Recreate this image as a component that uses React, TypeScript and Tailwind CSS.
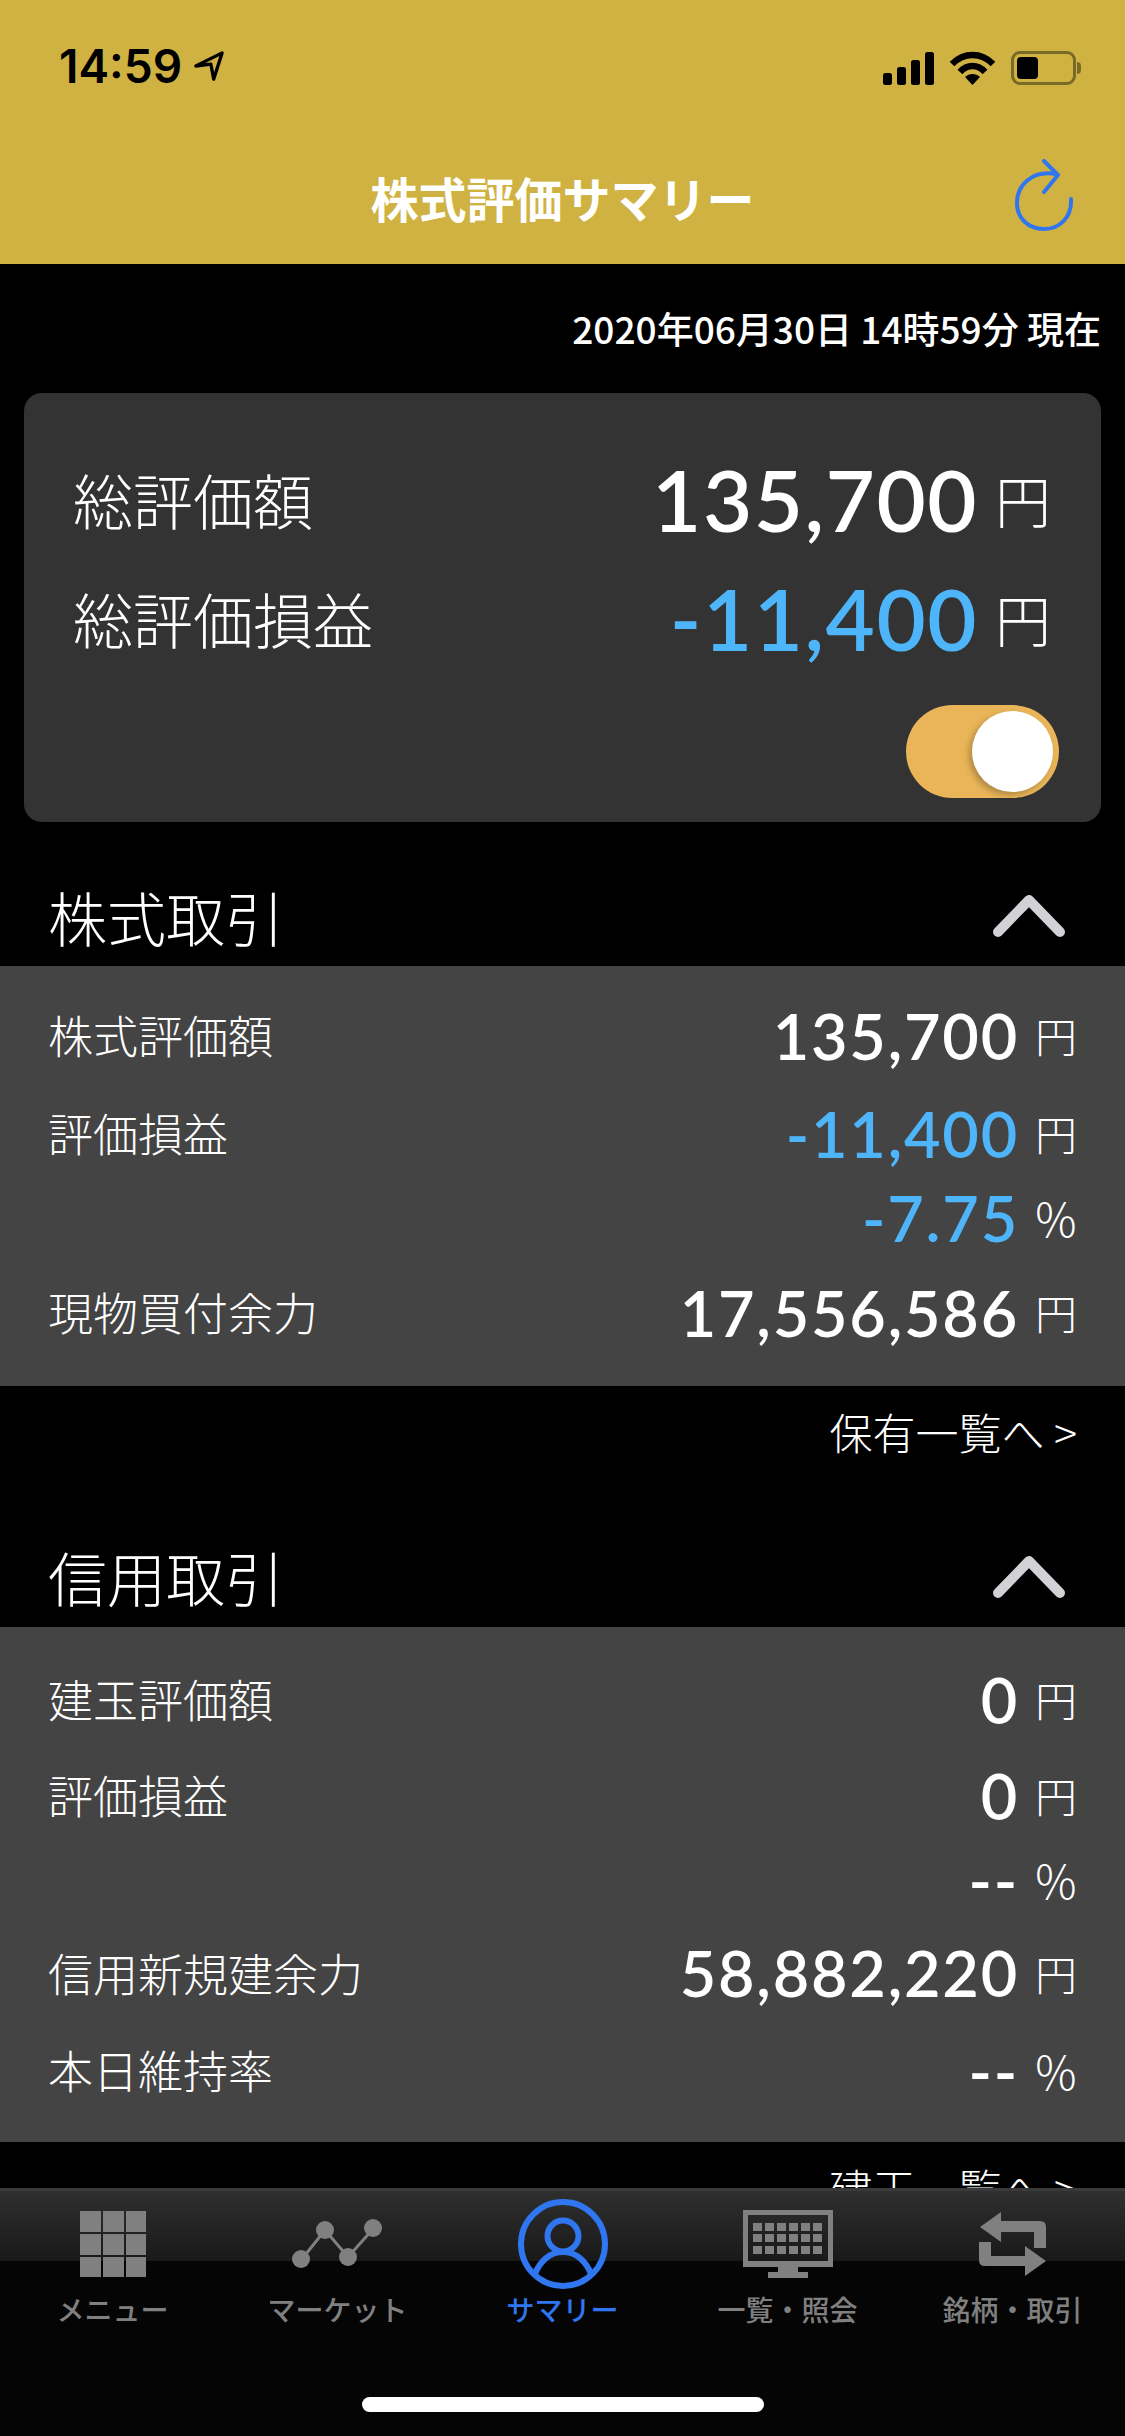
import React from 'react';

const jp = "font-['Noto_Sans_CJK_JP',sans-serif]";
const num = "font-['Lato','Noto_Sans_CJK_JP',sans-serif]";

type Row = {
    label?: string;
    value: string;
    unit: string;
    blue?: boolean;
    cls: string;
};

const stockRows: Row[] = [
    { label: '株式評価額', value: '135,700', unit: '円', cls: 'h-[96px]' },
    { label: '評価損益', value: '-11,400', unit: '円', blue: true, cls: 'h-[100px]' },
    { value: '-7.75', unit: '%', blue: true, cls: 'h-[68px]' },
    { label: '現物買付余力', value: '17,556,586', unit: '円', cls: 'h-[122px]' },
];

const marginRows: Row[] = [
    { label: '建玉評価額', value: '0', unit: '円', cls: 'h-[96px]' },
    { label: '評価損益', value: '0', unit: '円', cls: 'h-[96px]' },
    { value: '--', unit: '%', cls: 'h-[72px]' },
    { label: '信用新規建余力', value: '58,882,220', unit: '円', cls: 'h-[107px] pt-[8px]' },
    { label: '本日維持率', value: '--', unit: '%', cls: 'h-[96px]' },
];

const Chevron = () => (
    <svg width="72" height="42" viewBox="0 0 72 42" fill="none" stroke="#d1d1d6" strokeWidth="10" strokeLinecap="round" strokeLinejoin="round">
        <path d="M5 37 L36 5 L67 37" />
    </svg>
);

const DataRow = ({ row }: { row: Row }) => (
    <div className={`flex items-center justify-between pl-[48px] pr-[48px] ${row.cls}`}>
        <span className={`${jp} text-[45px] font-light text-white`}>{row.label}</span>
        <div className="flex items-center">
            <span className={`${num} text-[63px] font-semibold leading-none tracking-[1.8px] ${row.blue ? 'text-[#4fb5fb]' : 'text-white'}`}>{row.value}</span>
            <span className={`${jp} ml-[16px] w-[42px] text-center font-light leading-none text-white ${row.unit === '%' ? 'text-[46px]' : 'text-[42px]'}`}>{row.unit}</span>
        </div>
    </div>
);

const Section = ({ title, rows, link, top, panel }: { title: string; rows: Row[]; link: string; top: string; panel: string }) => (
    <section>
        <div className={`flex items-center justify-between pl-[48px] pr-[60px] ${top}`}>
            <h2 className={`${jp} text-[59px] font-light leading-none text-white`}>{title}</h2>
            <Chevron />
        </div>
        <div className={`bg-[#444444] ${panel}`}>
            {rows.map((row, i) => (
                <DataRow key={i} row={row} />
            ))}
        </div>
        <div className={`${jp} flex h-[96px] items-center justify-end pb-[6px] pr-[48px] text-[43px] font-light text-white`}>{link}</div>
    </section>
);

const MenuIcon = () => (
    <svg width="66" height="66" viewBox="0 0 66 66" fill="#808080">
        {[0, 23, 46].map((y) =>
            [0, 23, 46].map((x) => <rect key={`${x}-${y}`} x={x} y={y} width="21" height="21" />),
        )}
    </svg>
);

const MarketIcon = () => (
    <svg width="92" height="50" viewBox="0 0 92 50" fill="#808080" stroke="#808080">
        <path d="M10 40 L33 11 L56 38 L81 10" fill="none" strokeWidth="3" />
        <g stroke="none">
            <circle cx="9" cy="40" r="9" />
            <circle cx="33" cy="11" r="9" />
            <circle cx="56" cy="38" r="9" />
            <circle cx="81" cy="9" r="9" />
        </g>
    </svg>
);

const SummaryIcon = () => (
    <svg width="90" height="90" viewBox="0 0 90 90" fill="none" stroke="#2f76f0" strokeWidth="6">
        <circle cx="45" cy="45" r="42" />
        <circle cx="45" cy="37" r="15.5" />
        <path d="M17 75 C22 62 32 53 45 53 C58 53 68 62 73 75" />
    </svg>
);

const ListIcon = () => (
    <svg width="90" height="68" viewBox="0 0 90 68" fill="#808080">
        <path fillRule="evenodd" d="M0 0H90V57H55V62H65V68H25V62H35V57H0ZM5 5V51H85V5Z" />
        {[13, 24, 36].map((y) =>
            [10, 22, 34, 46, 58, 70].map((x) => <rect key={`${x}-${y}`} x={x} y={y} width="9" height="8" />),
        )}
    </svg>
);

const SwapIcon = () => (
    <svg width="68" height="64" viewBox="0 0 68 64" fill="#808080">
        <path d="M22 0 L1 15 L22 30 V20 H55 V36 H67 V15 Q67 9 61 9 H22 Z" />
        <path d="M46 34 L67 49 L46 64 V54 H6 Q0 54 0 48 V30 H12 V44 H46 Z" />
    </svg>
);

const tabs = [
    { label: 'メニュー', icon: <MenuIcon />, active: false },
    { label: 'マーケット', icon: <MarketIcon />, active: false },
    { label: 'サマリー', icon: <SummaryIcon />, active: true },
    { label: '一覧・照会', icon: <ListIcon />, active: false },
    { label: '銘柄・取引', icon: <SwapIcon />, active: false },
];

export default function App() {
    return (
        <div className="flex h-[2436px] w-[1125px] flex-col overflow-hidden bg-black">
            <header className="h-[264px] shrink-0 bg-[#cfb241]">
                <div className="flex h-[118px] items-end justify-between pb-[33px] pl-[59px] pr-[44px]">
                    <div className="mb-[-4px] flex items-center gap-[12px]">
                        <span className="font-['Inter',sans-serif] text-[46px] font-semibold leading-none text-black">14:59</span>
                        <svg width="30" height="30" viewBox="0 0 32 32" fill="none" stroke="#000" strokeWidth="3.5" strokeLinejoin="round">
                            <path d="M2 16 L30 2 L21 30 L18 14 Z" />
                        </svg>
                    </div>
                    <div className="flex items-center gap-[15px]">
                        <svg width="51" height="33" viewBox="0 0 51 33" fill="#000">
                            <rect x="0" y="21" width="9" height="12" rx="2.5" />
                            <rect x="14" y="15" width="9" height="18" rx="2.5" />
                            <rect x="28" y="8" width="9" height="25" rx="2.5" />
                            <rect x="42" y="0" width="9" height="33" rx="2.5" />
                        </svg>
                        <svg width="47" height="34" viewBox="0 0 47 34" fill="none" stroke="#000" strokeWidth="6.5">
                            <path d="M3 13 C15 1 32 1 44 13" />
                            <path d="M11 21 C18 13 29 13 36 21" />
                            <path d="M23.5 34 L16 26 C20 22 27 22 31 26 Z" fill="#000" stroke="none" />
                        </svg>
                        <div className="flex items-center">
                            <div className="flex h-[34px] w-[65px] items-center rounded-[9px] border-[3px] border-[#7a6a27] p-[3px]">
                                <div className="h-full w-[21px] rounded-[4px] bg-black" />
                            </div>
                            <div className="ml-[1px] h-[12px] w-[4px] rounded-r-full bg-[#7a6a27]" />
                        </div>
                    </div>
                </div>
                <div className="relative flex h-[146px] items-start justify-center pt-[55px]">
                    <h1 className={`${jp} text-[48px] font-bold leading-none text-white`}>株式評価サマリー</h1>
                    <svg className="absolute left-[1014px] top-[41px]" width="62" height="72" viewBox="0 0 62 72" fill="none" stroke="#2f76f0" strokeWidth="4" strokeLinecap="round" strokeLinejoin="round">
                        <path d="M42 15 C18 11 3 26 3 44 C3 60 15 70 30 70 C46 70 58 58 57 40" />
                        <path d="M30 2 L44 16 L30 33" />
                    </svg>
                </div>
            </header>

            <main className="min-h-0 flex-1 overflow-hidden">
                <div className={`${jp} flex h-[129px] items-start justify-end pr-[24px] pt-[44px] text-[37px] font-medium leading-[40px] text-white`}>
                    2020年06月30日 14時59分 現在
                </div>

                <div className="mx-[24px] h-[429px] rounded-[18px] bg-[#333333] pl-[49px] pr-[50px] pt-[56px]">
                    <div className="flex h-[100px] items-center justify-between">
                        <span className={`${jp} text-[60px] font-light leading-[80px] text-white`}>総評価額</span>
                        <div className="flex items-center">
                            <span className={`${num} text-[85px] font-semibold leading-[90px] tracking-[1.5px] text-white`}>135,700</span>
                            <span className={`${jp} ml-[17px] text-[56px] font-light text-white`}>円</span>
                        </div>
                    </div>
                    <div className="mt-[19px] flex h-[100px] items-center justify-between">
                        <span className={`${jp} text-[60px] font-light leading-[80px] text-white`}>総評価損益</span>
                        <div className="flex items-center">
                            <span className={`${num} text-[85px] font-semibold leading-[90px] tracking-[1.5px] text-[#4fb5fb]`}>-11,400</span>
                            <span className={`${jp} ml-[17px] text-[56px] font-light text-white`}>円</span>
                        </div>
                    </div>
                    <div className="mt-[37px] flex justify-end">
                        <div className="mr-[-8px] flex h-[93px] w-[153px] items-center justify-end rounded-full bg-[#e9b558] pr-[6px]">
                            <div className="h-[81px] w-[81px] rounded-full bg-white shadow-[-3px_3px_6px_rgba(0,0,0,0.25)]" />
                        </div>
                    </div>
                </div>

                <Section title="株式取引" rows={stockRows} link="保有一覧へ >" top="h-[144px] pt-[44px]" panel="pt-[21px] pb-[13px]" />
                <Section title="信用取引" rows={marginRows} link="建玉一覧へ >" top="h-[145px] pt-[44px]" panel="pt-[24px] pb-[24px]" />
            </main>

            <nav className="h-[248px] shrink-0 border-t-[3px] border-[#3a3a3a] bg-[linear-gradient(#2f2f2f_0,#191919_70px,#050505_70px)]">
                <div className="grid grid-cols-5">
                    {tabs.map((tab) => (
                        <div key={tab.label} className="flex flex-col items-center">
                            <div className="flex h-[104px] items-center pt-[2px]">{tab.icon}</div>
                            <span className={`${jp} mt-[-4px] text-[28px] leading-[36px] font-medium ${tab.active ? 'text-[#2f76f0]' : 'text-[#808080]'}`}>{tab.label}</span>
                        </div>
                    ))}
                </div>
                <div className="mx-auto mt-[70px] h-[15px] w-[402px] rounded-full bg-white" />
            </nav>
        </div>
    );
}
